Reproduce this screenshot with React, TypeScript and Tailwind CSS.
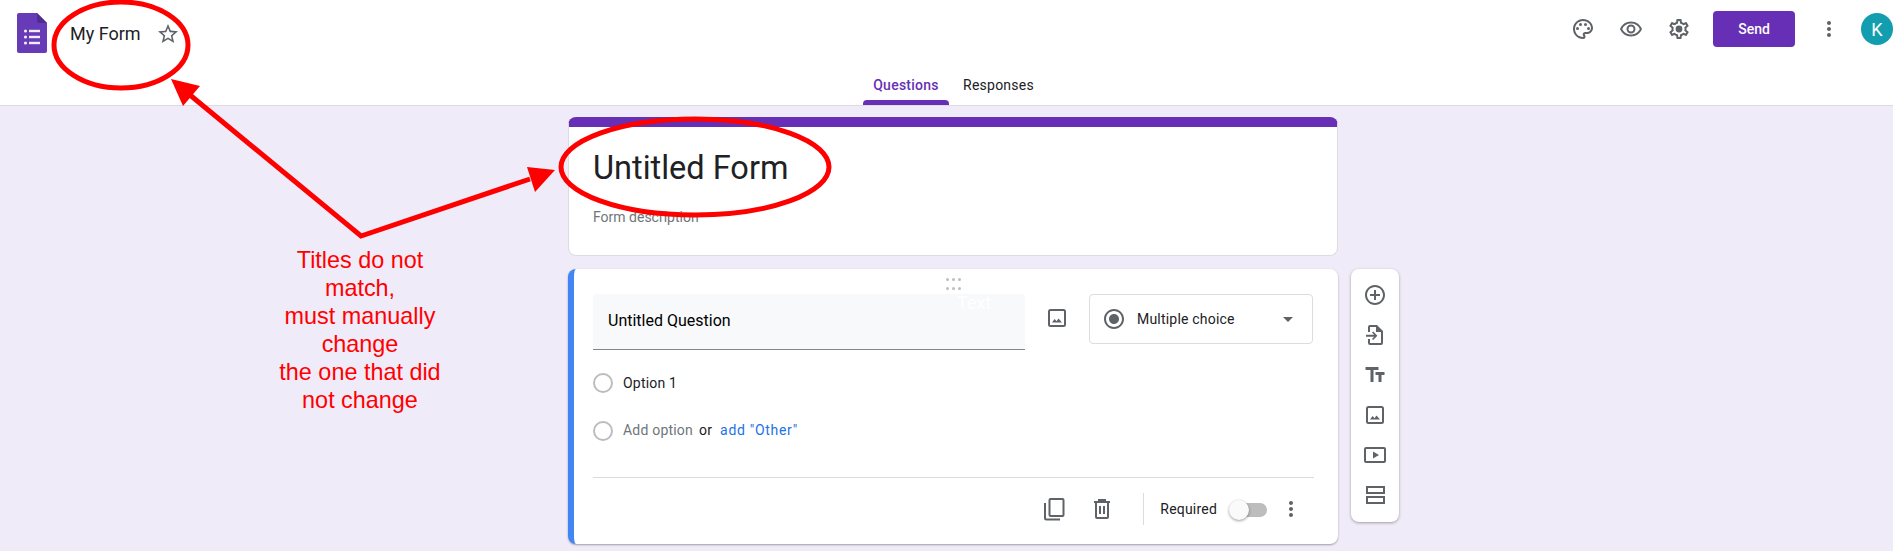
import React from 'react';
import {
  MdAddCircleOutline,
  MdArrowDropDown,
  MdMoreVert,
  MdOutlinePalette,
  MdOutlineRemoveRedEye,
  MdRadioButtonChecked,
  MdStarBorder,
  MdTextFields,
} from 'react-icons/md';

const FormsLogo = () => (
  <svg width="30" height="40" viewBox="0 0 30 40" className="shrink-0">
    <path d="M2 0h18l10 10v28a2 2 0 0 1-2 2H2a2 2 0 0 1-2-2V2a2 2 0 0 1 2-2z" fill="#673ab7" />
    <path d="M20 0l10 10H22a2 2 0 0 1-2-2z" fill="#4f2b94" />
    <g fill="#f1ecf9">
      <circle cx="8.5" cy="18" r="1.6" />
      <circle cx="8.5" cy="24" r="1.6" />
      <circle cx="8.5" cy="30" r="1.6" />
      <rect x="12" y="16.8" width="11" height="2.4" />
      <rect x="12" y="22.8" width="11" height="2.4" />
      <rect x="12" y="28.8" width="11" height="2.4" />
    </g>
  </svg>
);

const GearIcon = () => (
  <svg width="24" height="24" viewBox="0 0 24 24" fill="#5f6368">
    <path d="M19.43 12.98c.04-.32.07-.64.07-.98 0-.34-.03-.66-.07-.98l2.11-1.65c.19-.15.24-.42.12-.64l-2-3.46c-.09-.16-.26-.25-.44-.25-.06 0-.12.01-.17.03l-2.49 1c-.52-.4-1.08-.73-1.69-.98l-.38-2.65C14.46 2.18 14.25 2 14 2h-4c-.25 0-.46.18-.49.42l-.38 2.65c-.61.25-1.17.59-1.69.98l-2.49-1c-.06-.02-.12-.03-.18-.03-.17 0-.34.09-.43.25l-2 3.46c-.13.22-.07.49.12.64l2.11 1.65c-.04.32-.07.65-.07.98 0 .33.03.66.07.98l-2.11 1.65c-.19.15-.24.42-.12.64l2 3.46c.09.16.26.25.44.25.06 0 .12-.01.17-.03l2.49-1c.52.4 1.08.73 1.69.98l.38 2.65c.03.24.24.42.49.42h4c.25 0 .46-.18.49-.42l.38-2.65c.61-.25 1.17-.59 1.69-.98l2.49 1c.06.02.12.03.18.03.17 0 .34-.09.43-.25l2-3.46c.12-.22.07-.49-.12-.64l-2.11-1.65zm-1.98-1.71c.04.31.05.52.05.73 0 .21-.02.43-.05.73l-.14 1.13.89.7 1.08.84-.7 1.21-1.27-.51-1.04-.42-.9.68c-.43.32-.84.56-1.25.73l-1.06.43-.16 1.13-.2 1.35h-1.4l-.19-1.35-.16-1.13-1.06-.43c-.43-.18-.83-.41-1.23-.71l-.91-.7-1.06.43-1.27.51-.7-1.21 1.08-.84.89-.7-.14-1.13c-.03-.31-.05-.54-.05-.74s.02-.43.05-.73l.14-1.13-.89-.7-1.08-.84.7-1.21 1.27.51 1.04.42.9-.68c.43-.32.84-.56 1.25-.73l1.06-.43.16-1.13.2-1.35h1.39l.19 1.35.16 1.13 1.06.43c.43.18.83.41 1.23.71l.91.7 1.06-.43 1.27-.51.7 1.21-1.07.85-.89.7.14 1.13z" />
    <circle cx="12" cy="12" r="3.4" />
  </svg>
);

const ImageIcon = () => (
  <svg width="24" height="24" viewBox="0 0 24 24" fill="none">
    <rect x="4" y="4" width="16" height="16" rx="1.5" stroke="#5f6368" strokeWidth="2" />
    <path d="M7 16.5l2.6-3.4 1.9 2.2 2-2.8 3.5 4z" fill="#5f6368" />
  </svg>
);

const ImportIcon = () => (
  <svg width="24" height="24" viewBox="0 0 24 24" fill="#5f6368">
    <path d="M14 2H7a2 2 0 0 0-2 2v5h2V4h6v5h5v11H7v-4H5v4a2 2 0 0 0 2 2h11a2 2 0 0 0 2-2V8z" />
    <path d="M3 11.8h8.2L9 9.6l1.2-1.1 4.2 4.3-4.2 4.2L9 15.9l2.2-2.1H3z" />
  </svg>
);

const VideoIcon = () => (
  <svg width="24" height="24" viewBox="0 0 24 24" fill="none">
    <rect x="2" y="5" width="20" height="14" rx="1" stroke="#5f6368" strokeWidth="2" />
    <path d="M10 8.5l6 3.5-6 3.5z" fill="#5f6368" />
  </svg>
);

const SectionIcon = () => (
  <svg width="24" height="24" viewBox="0 0 24 24" fill="none" stroke="#5f6368" strokeWidth="2">
    <rect x="4" y="4" width="17" height="6" />
    <rect x="4" y="14" width="17" height="6" />
  </svg>
);

const CopyIcon = () => (
  <svg width="24" height="24" viewBox="0 0 24 24" fill="none" stroke="#5f6368" strokeWidth="2">
    <rect x="7.5" y="2" width="14" height="17" rx="1" />
    <path d="M3 6v15a1.5 1.5 0 0 0 1.5 1.5H18" />
  </svg>
);

const TrashIcon = () => (
  <svg width="24" height="24" viewBox="0 0 24 24" fill="none" stroke="#5f6368" strokeWidth="2">
    <path d="M4 5h16M9 5V3h6v2M6 5v15a1 1 0 0 0 1 1h10a1 1 0 0 0 1-1V5M10 9v8M14 9v8" />
  </svg>
);

const Radio = () => <div className="w-5 h-5 rounded-full border-2 border-[#bdbdbd] shrink-0" />;

const DragDots = () => (
  <div className="grid grid-cols-3 gap-x-[3px] gap-y-[2px]">
    {[0, 1, 2, 3, 4, 5].map((i) => (
      <div key={i} className="w-[3px] h-[3px] rounded-full bg-[#bdbdbd]" />
    ))}
  </div>
);

const Header = () => (
  <header className="h-[106px] shrink-0 bg-white border-b border-[#dadce0] flex flex-col">
    <div className="h-[58px] flex items-start">
      <div className="flex items-center pl-[17px] pt-[13px]">
        <FormsLogo />
        <span className="ml-[23px] mt-[1px] text-[18px] text-[#202124]">My Form</span>
        <MdStarBorder className="ml-[15px] mt-[1px] text-[#5f6368]" size={24} />
      </div>
      <div className="ml-auto flex items-center pt-[11px] text-[#5f6368]">
        <div className="flex items-center gap-[24px]">
          <MdOutlinePalette size={24} />
          <MdOutlineRemoveRedEye size={24} />
          <GearIcon />
        </div>
        <button className="ml-[22px] w-[82px] h-[36px] rounded bg-[#672fb5] text-white text-[14px] font-medium">
          Send
        </button>
        <MdMoreVert className="ml-[22px]" size={24} />
        <div className="ml-[20px] w-[32px] h-[32px] rounded-full bg-[#129eaf] text-white text-[18px] flex items-center justify-center">
          K
        </div>
      </div>
    </div>
    <nav className="flex-1 flex pl-[863px] text-[14px] tracking-[0.25px]">
      <div className="w-[86px] flex flex-col items-center justify-between">
        <span className="mt-[17px] font-medium text-[#672fb5]">Questions</span>
        <div className="w-full h-[5px] rounded-t bg-[#672fb5]" />
      </div>
      <span className="ml-[14px] mt-[17px] text-[#202124]">Responses</span>
    </nav>
  </header>
);

const TitleCard = () => (
  <section className="h-[139px] rounded-lg bg-white border border-[#dadce0] border-t-[10px] border-t-[#672fb5] pl-[24px]">
    <h1 className="mt-[19px] text-[32.5px] leading-[44px] text-[#202124]">Untitled Form</h1>
    <p className="mt-[17px] text-[14px] leading-[20px] text-[#70757a]">Form description</p>
  </section>
);

const QuestionCard = () => (
  <section className="relative h-[275px] rounded-lg bg-white border-l-[6px] border-l-[#4285f4] shadow-[0_1px_2px_rgba(60,64,67,0.45)] pl-[19px] pr-[24px]">
    <div className="flex justify-center h-[25px] pt-[9px]">
      <DragDots />
    </div>
    <span className="absolute left-[383px] top-[20px] text-[18px] text-white">Text</span>
    <div className="flex items-start">
      <div className="w-[432px] h-[56px] bg-[#f8f9fa] border-b border-[#80868b] rounded-t flex items-center pl-[15px] pb-[1px] text-[16px] text-black">
        Untitled Question
      </div>
      <div className="ml-[20px] mt-[12px]">
        <ImageIcon />
      </div>
      <div className="ml-[20px] w-[224px] h-[50px] rounded border border-[#dadce0] flex items-center pl-[12px] pr-[12px] text-[14px] text-[#202124]">
        <MdRadioButtonChecked className="text-[#5f6368]" size={24} />
        <span className="ml-[11px] tracking-[0.2px]">Multiple choice</span>
        <MdArrowDropDown className="ml-auto text-[#5f6368]" size={24} />
      </div>
    </div>
    <div className="mt-[23px] flex items-center gap-[10px] h-[20px] text-[14px] text-[#202124] tracking-[0.2px]">
      <Radio />
      <span>Option 1</span>
    </div>
    <div className="mt-[28px] flex items-center h-[20px] text-[14px] tracking-[0.2px]">
      <Radio />
      <span className="ml-[10px] -mt-[2px] text-[#70757a]">Add option</span>
      <span className="ml-[6px] -mt-[2px] text-[#202124]">or</span>
      <span className="ml-[8px] -mt-[2px] text-[#1a73e8] tracking-[0.7px]">add "Other"</span>
    </div>
    <div className="mt-[36px] border-t border-[#dadce0] flex items-center justify-end h-[64px] pb-[2px] pr-[11px]">
      <CopyIcon />
      <div className="ml-[24px]">
        <TrashIcon />
      </div>
      <div className="ml-[29px] w-px h-[32px] bg-[#dadce0]" />
      <span className="ml-[16px] mt-[2px] text-[14px] text-[#202124] tracking-[0.2px]">Required</span>
      <div className="relative ml-[13px] w-[37px] h-[14px] mt-[2px] rounded-full bg-[#bdbdbd]">
        <div className="absolute -left-[1px] -top-[3px] w-[20px] h-[20px] rounded-full bg-[#fafafa] shadow-[0_1px_3px_rgba(0,0,0,0.4)]" />
      </div>
      <MdMoreVert className="ml-[12px] text-[#5f6368]" size={24} />
    </div>
  </section>
);

const ToolRail = () => (
  <aside className="w-[48px] h-[253px] mt-[152px] rounded-lg bg-white shadow-[0_1px_3px_rgba(60,64,67,0.45)] flex flex-col items-center gap-[16px] pt-[14px] text-[#5f6368]">
    <MdAddCircleOutline size={24} />
    <ImportIcon />
    <MdTextFields size={24} />
    <ImageIcon />
    <VideoIcon />
    <SectionIcon />
  </aside>
);

// red markup drawn on top of the screenshot
const Annotation = () => (
  <>
    <svg className="absolute inset-0 pointer-events-none" width="1893" height="551" fill="none">
      <ellipse cx="121" cy="45" rx="67" ry="43" stroke="#ff0000" strokeWidth="5" />
      <ellipse cx="695" cy="167" rx="134" ry="48" stroke="#ff0000" strokeWidth="5" />
      <polyline points="190,95 361,236 530,179" stroke="#ff0000" strokeWidth="5" />
      <polygon points="171,79 200,86 183,106" fill="#ff0000" />
      <polygon points="555,170 527,167 535,192" fill="#ff0000" />
    </svg>
    <div className="absolute left-[240px] top-[246px] w-[240px] text-center text-[23.4px] leading-[28px] text-[#ff0000] font-['Liberation_Sans',sans-serif]">
      Titles do not
      <br />
      match,
      <br />
      must manually
      <br />
      change
      <br />
      the one that did
      <br />
      not change
    </div>
  </>
);

const App = () => {
  return (
    <div className="relative w-[1893px] h-[551px] overflow-hidden flex flex-col bg-[#f0ebf8] font-['Roboto',sans-serif]">
      <Header />
      <main className="flex-1 flex gap-[13px] pl-[568px] pt-[11px]">
        <div className="w-[770px] flex flex-col gap-[13px]">
          <TitleCard />
          <QuestionCard />
        </div>
        <ToolRail />
      </main>
      <Annotation />
    </div>
  );
};

export default App;
